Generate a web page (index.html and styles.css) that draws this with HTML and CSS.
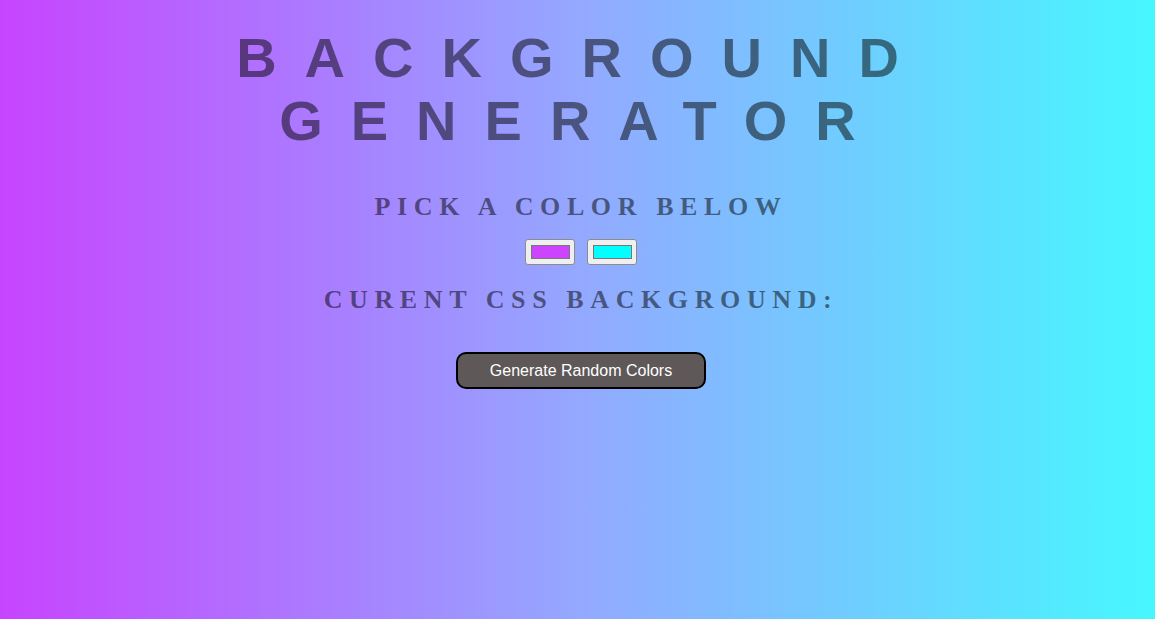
FILE: index.html
```html
<!DOCTYPE html>
<html lang="en">
<head>
<meta charset="utf-8">
<title>Background Generator</title>
<link rel="stylesheet" href="styles.css">
</head>
<body class="page">
  <main class="content">
    <h1 class="title">Background Generator</h1>
    <h3 class="subtitle">Pick a color below</h3>
    <div class="pickers">
      <input class="picker" type="color" value="#cc44ff">
      <input class="picker" type="color" value="#00ffff">
    </div>
    <h3 class="subtitle">Curent CSS Background:</h3>
    <div class="actions">
      <button class="random-btn" type="button">Generate Random Colors</button>
    </div>
  </main>
</body>
</html>
```
FILE: styles.css
```css
html, body {
  margin: 0;
  padding: 0;
  height: 100%;
}

.page {
  background: linear-gradient(to right, #c744ff 0%, #94a8ff 50%, #46f7ff 100%);
  overflow: hidden;
}

.content {
  display: flex;
  flex-direction: column;
  align-items: center;
  padding: 26px 0 0 7px;
}

.title {
  margin: 0;
  padding-left: 1px;
  font-family: "Liberation Sans", Arial, sans-serif;
  font-weight: 700;
  font-size: 56px;
  line-height: 63px;
  letter-spacing: 28px;
  text-transform: uppercase;
  text-align: center;
  color: rgba(0, 0, 0, 0.5);
  width: 1100px;
}

.subtitle {
  margin: 40px 0 0;
  font-family: "Liberation Serif", "Times New Roman", serif;
  font-weight: 700;
  font-size: 26px;
  line-height: 30px;
  letter-spacing: 6.6px;
  text-transform: uppercase;
  text-align: center;
  color: rgba(0, 0, 0, 0.5);
}

.pickers {
  display: flex;
  gap: 12px;
  margin: 17px 0 20px;
}

.pickers + .subtitle {
  margin-top: 0;
}

.picker {
  -webkit-appearance: none;
  appearance: none;
  box-sizing: border-box;
  width: 50px;
  height: 26px;
  margin: 0;
  padding: 0;
  border: 1px solid #8c8c8c;
  border-radius: 3px;
  background: #efefef;
  cursor: pointer;
}

.picker::-webkit-color-swatch-wrapper {
  padding: 5px 4px 5px 5px;
}

.picker::-webkit-color-swatch {
  border: 1px solid #777;
  border-radius: 0;
}

.actions {
  margin-top: 37px;
}

.random-btn {
  box-sizing: border-box;
  width: 250px;
  height: 37px;
  border: 2px solid #000;
  border-radius: 10px;
  background: #5e5858;
  color: #fff;
  font-family: "Liberation Sans", Arial, sans-serif;
  font-size: 16px;
  padding: 0;
  cursor: pointer;
}
```
